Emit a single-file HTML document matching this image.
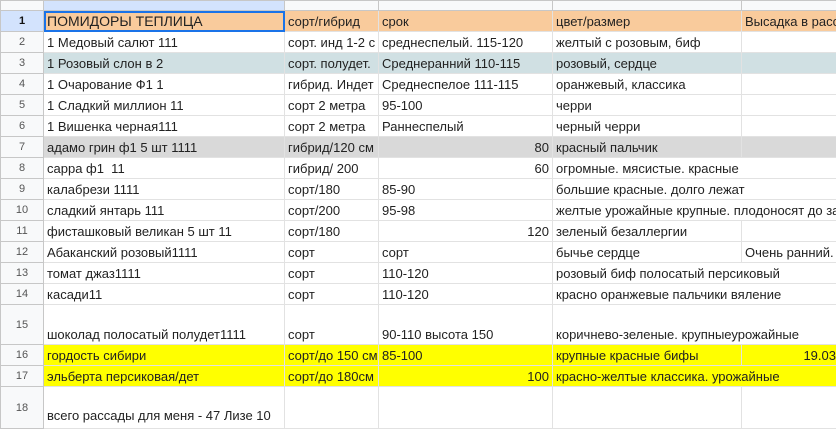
<!DOCTYPE html>
<html><head><meta charset="utf-8"><style>
body{margin:0;width:836px;height:428px;overflow:hidden;background:#fff;font-family:"Liberation Sans",Arial,sans-serif;}
table{border-collapse:collapse;table-layout:fixed;position:absolute;left:0;top:0;width:836px;}
td{border:1px solid #e2e2e2;font-size:13px;color:#222;white-space:nowrap;overflow:hidden;padding:0 3px 2px 3px;vertical-align:bottom;height:20px;box-sizing:border-box;}
td.n{background:#f8f9fa;color:#555;font-size:11px;text-align:center;vertical-align:middle;padding:0;border-color:#c7c7c7;}
tr.h td{height:10px;background:#f8f9fa;border-color:#c7c7c7;padding:0}
.r{text-align:right}
.o{background:#f9cb9c}
.g{background:#d0e0e3}
.s{background:#d9d9d9}
.y{background:#ffff00}
td.ov{overflow:visible;border-right:1px hidden}
.nl{border-left:1px hidden}
</style></head><body>
<table>
<colgroup><col style="width:43px"><col style="width:241px"><col style="width:94px"><col style="width:174px"><col style="width:189px"><col style="width:95px"></colgroup>
<tr class="h"><td style="width:43px"></td><td style="width:241px;background:#d3e3fd"></td><td style="width:94px"></td><td style="width:174px"></td><td style="width:189px"></td><td style="width:95px"></td></tr>
<tr style="height:21px"><td class="n" style="background:#d3e3fd;color:#111;font-weight:bold">1</td><td class="o" style="outline:2px solid #1a73e8;outline-offset:-2px;font-size:14px">ПОМИДОРЫ ТЕПЛИЦА</td><td class="o">сорт/гибрид</td><td class="o">срок</td><td class="o">цвет/размер</td><td class="o">Высадка в рассаду</td></tr>
<tr style="height:21px"><td class="n">2</td><td>1 Медовый салют 111</td><td>сорт. инд 1-2 с</td><td>среднеспелый. 115-120</td><td>желтый с розовым, биф</td><td></td></tr>
<tr style="height:21px"><td class="n">3</td><td class="g">1 Розовый слон в 2</td><td class="g">сорт. полудет.</td><td class="g">Среднеранний 110-115</td><td class="g">розовый, сердце</td><td class="g"></td></tr>
<tr style="height:21px"><td class="n">4</td><td>1 Очарование Ф1 1</td><td>гибрид. Индет</td><td>Среднеспелое 111-115</td><td>оранжевый, классика</td><td></td></tr>
<tr style="height:21px"><td class="n">5</td><td>1 Сладкий миллион 11</td><td>сорт 2 метра</td><td>95-100</td><td>черри</td><td></td></tr>
<tr style="height:21px"><td class="n">6</td><td>1 Вишенка черная111</td><td>сорт 2 метра</td><td>Раннеспелый</td><td>черный черри</td><td></td></tr>
<tr style="height:21px"><td class="n">7</td><td class="s">адамо грин ф1 5 шт 1111</td><td class="s">гибрид/120 см</td><td class="s r">80</td><td class="s">красный пальчик</td><td class="s"></td></tr>
<tr style="height:21px"><td class="n">8</td><td>сарра ф1&nbsp; 11</td><td>гибрид/ 200</td><td class="r">60</td><td class="ov">огромные. мясистые. красные</td><td class="nl"></td></tr>
<tr style="height:21px"><td class="n">9</td><td>калабрези 1111</td><td>сорт/180</td><td>85-90</td><td class="ov">большие красные. долго лежат</td><td class="nl"></td></tr>
<tr style="height:21px"><td class="n">10</td><td>сладкий янтарь 111</td><td>сорт/200</td><td>95-98</td><td class="ov">желтые урожайные крупные. плодоносят до заморозков</td><td class="nl"></td></tr>
<tr style="height:21px"><td class="n">11</td><td>фисташковый великан 5 шт 11</td><td>сорт/180</td><td class="r">120</td><td>зеленый безаллергии</td><td></td></tr>
<tr style="height:21px"><td class="n">12</td><td>Абаканский розовый1111</td><td>сорт</td><td>сорт</td><td>бычье сердце</td><td>Очень ранний.</td></tr>
<tr style="height:21px"><td class="n">13</td><td>томат джаз1111</td><td>сорт</td><td>110-120</td><td class="ov">розовый биф полосатый персиковый</td><td class="nl"></td></tr>
<tr style="height:21px"><td class="n">14</td><td>касади11</td><td>сорт</td><td>110-120</td><td class="ov">красно оранжевые пальчики вяление</td><td class="nl"></td></tr>
<tr style="height:40px"><td class="n" style="height:40px">15</td><td style="height:40px">шоколад полосатый полудет1111</td><td>сорт</td><td>90-110 высота 150</td><td class="ov">коричнево-зеленые. крупныеурожайные</td><td class="nl"></td></tr>
<tr style="height:21px"><td class="n">16</td><td class="y">гордость сибири</td><td class="y" style="padding-right:0">сорт/до 150 см</td><td class="y">85-100</td><td class="y">крупные красные бифы</td><td class="y r" style="padding-right:0">19.03</td></tr>
<tr style="height:21px"><td class="n">17</td><td class="y">эльберта персиковая/дет</td><td class="y">сорт/до 180см</td><td class="y r">100</td><td class="y ov">красно-желтые классика. урожайные</td><td class="y nl"></td></tr>
<tr style="height:42px"><td class="n" style="height:42px">18</td><td style="height:42px;padding-bottom:5px">всего рассады для меня - 47 Лизе 10</td><td></td><td></td><td></td><td></td></tr>
</table>
</body></html>
